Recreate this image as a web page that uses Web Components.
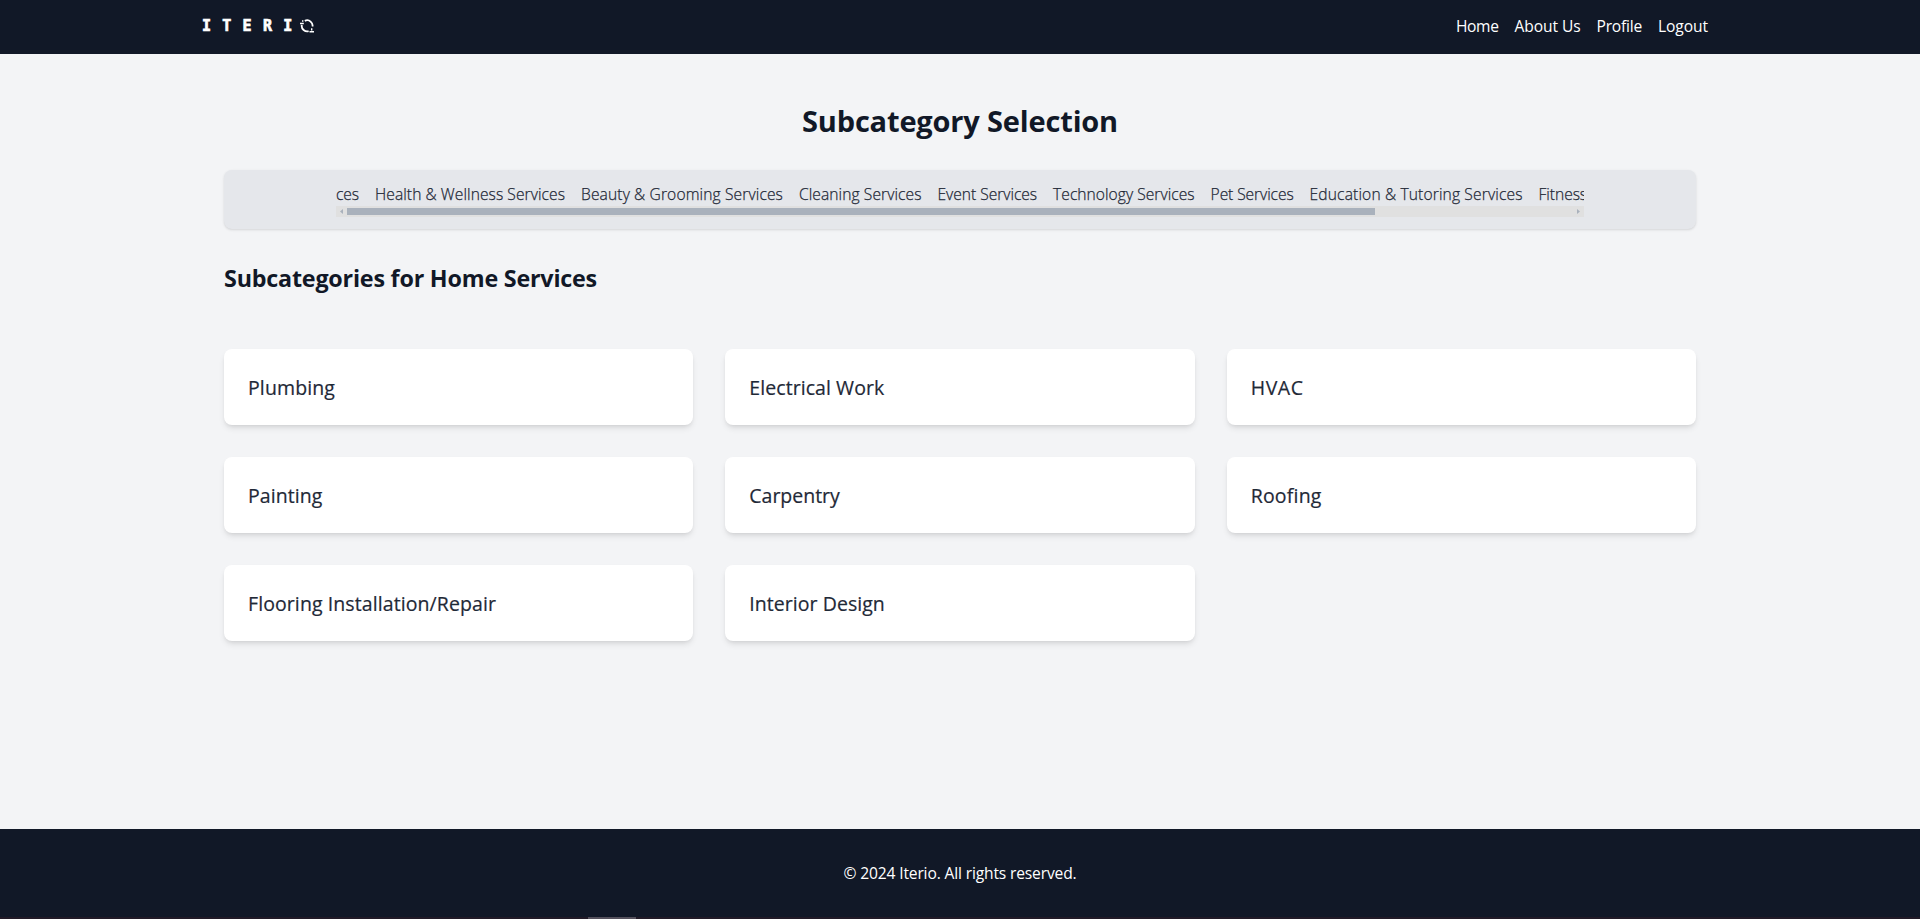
<!DOCTYPE html>
<html lang="en">
<head>
<meta charset="utf-8">
<title>Iterio</title>
<style>
html,body{margin:0;height:100%;overflow:hidden}
body{font-family:"Open Sans","Noto Sans",sans-serif;background:#f3f4f6;color:#111827}
</style>
</head>
<body>
<iterio-app></iterio-app>
<script>
const make=(name,html,ready)=>customElements.define(name,class extends HTMLElement{
  connectedCallback(){
    if(this.shadowRoot)return;
    const t=document.createElement('template');
    t.innerHTML=html;
    this.attachShadow({mode:'open'}).append(t.content.cloneNode(true));
    if(ready)ready.call(this);
  }
});

/* A single line of text whose tracking is set so that it fills the width "w". */
make('fit-text',`<style>
:host{display:block;white-space:nowrap}
span{display:inline-block}
</style><span><slot></slot></span>`,function(){
  const w=+this.getAttribute('w'),s=this.shadowRoot.querySelector('span');
  this.style.width=w+'px';
  const n=this.textContent.length;
  s.style.letterSpacing=(w-s.getBoundingClientRect().width)/n+'px';
});

make('iterio-logo',`<style>
:host{display:flex;align-items:center;width:112px;height:14px;color:#fff}
b{font:700 15px/14px "DejaVu Sans Mono",monospace;width:20.3px;flex:none;-webkit-text-stroke:.7px #fff}
svg{display:block;flex:none;margin-left:-3px}
</style><b>I</b><b>T</b><b>E</b><b>R</b><b>I</b>
<svg width="14" height="14" viewBox="0 0 14 14" fill="none" stroke="#fff" stroke-width="1.8">
<path d="M4.8 1.9Q8 .2 10.6 2.6T12.4 7.6"/><path d="M1.8 5.8Q1.2 9 3.6 11T8.6 12.2"/>
<path d="M0 4.5h3.8M2.7 1.2v1.6M9.5 12.8h4.5M11.7 9.3v2.2" stroke-width="1.4"/></svg>`);

make('site-header',`<style>
:host{display:flex;box-sizing:border-box;height:54px;padding:0 212px 0 202px;background:#111827;color:#fff;justify-content:space-between;align-items:center}
nav{display:flex;gap:16px;font-size:15.6px;line-height:24px;padding-bottom:2px}
iterio-logo{margin-bottom:2px}
</style><iterio-logo></iterio-logo>
<nav><fit-text w="42.5">Home</fit-text><fit-text w="66">About Us</fit-text><fit-text w="45.5">Profile</fit-text><fit-text w="50">Logout</fit-text></nav>`);

make('category-bar',`<style>
:host{display:block;box-sizing:border-box;height:59px;padding:12px 112px 0;background:#e5e7eb;border-radius:8px;box-shadow:0 1px 3px rgba(0,0,0,.1),0 1px 2px -1px rgba(0,0,0,.1)}
.items{display:flex;gap:16px;height:24px;overflow:hidden;font-size:15.6px;line-height:24px;font-weight:300;color:#1f2937;-webkit-text-stroke:.25px #1f2937}
.items>*{flex:none}
.first{width:23px;display:flex;justify-content:flex-end;overflow:hidden}
.track{display:flex;align-items:center;justify-content:space-between;height:11px;background:#e0e0e0;box-sizing:border-box;padding:0 4px}
.thumb{width:1028px;height:7px;background:#a9b1bc;margin:0 auto 0 4px}
svg{display:block}
</style><div class="items"><div class="first"><fit-text w="23">ces</fit-text></div>
<fit-text w="190">Health &amp; Wellness Services</fit-text><fit-text w="202">Beauty &amp; Grooming Services</fit-text><fit-text w="122.5">Cleaning Services</fit-text><fit-text w="99.6">Event Services</fit-text><fit-text w="141.5">Technology Services</fit-text><fit-text w="83">Pet Services</fit-text><fit-text w="213">Education &amp; Tutoring Services</fit-text><fit-text w="48.5">Fitness</fit-text></div>
<div class="track"><svg width="3" height="5"><path d="M3 0v5L0 2.5z" fill="#a9b1bc"/></svg><div class="thumb"></div><svg width="3" height="5"><path d="M0 0v5L3 2.5z" fill="#a9b1bc"/></svg></div>`);

make('service-card',`<style>
:host{display:block;box-sizing:border-box;height:76px;padding:25px 24px 23px;background:#fff;border-radius:8px;color:#1f2937;font-size:19.5px;line-height:28px;font-weight:500;box-shadow:0 4px 6px -1px rgba(0,0,0,.1),0 2px 4px -2px rgba(0,0,0,.1);-webkit-text-stroke:.2px #1f2937}
</style><slot></slot>`);

make('site-footer',`<style>
:host{display:flex;flex-direction:column;height:90px;background:#111827;color:#fff;font-size:15.6px;line-height:24px}
.copy{flex:1;display:flex;justify-content:center;align-items:center}
.edge{height:2px;background:#211a27;padding-left:588px}
.edge i{display:block;width:48px;height:2px;background:#54505c}
</style><div class="copy"><fit-text w="233">© 2024 Iterio. All rights reserved.</fit-text></div><div class="edge"><i></i></div>`);

make('iterio-app',`<style>
:host{display:flex;flex-direction:column;height:919px}
main{flex:1;padding:49px 224px 0}
h1,h2{margin:0;font-weight:700}
h1{font-size:29px;line-height:36px;display:flex;justify-content:center;padding-bottom:31px}
h2{font-size:23.3px;line-height:32px;padding:33px 0 55px}
.grid{display:grid;grid-template-columns:repeat(3,1fr);gap:32px}
</style>
<site-header></site-header>
<main>
<h1><fit-text w="316">Subcategory Selection</fit-text></h1>
<category-bar></category-bar>
<h2><fit-text w="373">Subcategories for Home Services</fit-text></h2>
<div class="grid">
<service-card><fit-text w="87">Plumbing</fit-text></service-card>
<service-card><fit-text w="135">Electrical Work</fit-text></service-card>
<service-card><fit-text w="53">HVAC</fit-text></service-card>
<service-card><fit-text w="74.5">Painting</fit-text></service-card>
<service-card><fit-text w="90.5">Carpentry</fit-text></service-card>
<service-card><fit-text w="71">Roofing</fit-text></service-card>
<service-card><fit-text w="248">Flooring Installation/Repair</fit-text></service-card>
<service-card><fit-text w="135.5">Interior Design</fit-text></service-card>
</div>
</main>
<site-footer></site-footer>`);
</script>
</body>
</html>
